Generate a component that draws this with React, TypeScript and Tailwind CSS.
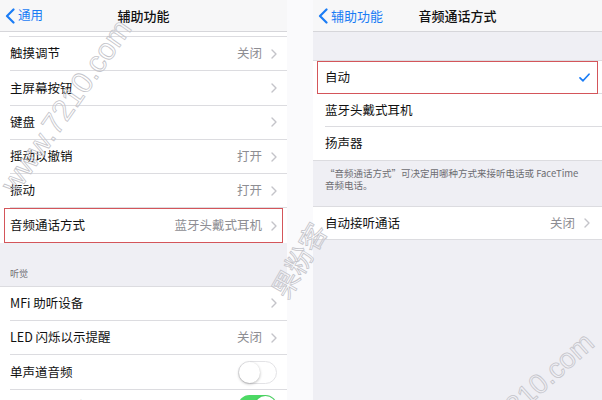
import React from "react";

type Row = {
  label: string;
  value?: string;
  chevron?: boolean;
  toggle?: "on" | "off";
  check?: boolean;
  highlight?: boolean;
  last?: boolean;
};

const Chevron = () => (
  <svg width="6" height="10" viewBox="0 0 6 10" className="shrink-0">
    <path d="M1 1l4 4-4 4" fill="none" stroke="#c4c4c9" strokeWidth="1.4" strokeLinecap="round" strokeLinejoin="round" />
  </svg>
);

const BackArrow = () => (
  <svg width="10" height="16" viewBox="0 0 10 16" className="shrink-0">
    <path d="M8.5 1.5L2 8l6.5 6.5" fill="none" stroke="#1a7cf5" strokeWidth="2.2" strokeLinecap="round" strokeLinejoin="round" />
  </svg>
);

const Check = () => (
  <svg width="11" height="9" viewBox="0 0 11 9">
    <path d="M1 4.8l3 3L10 1.2" fill="none" stroke="#1a7cf5" strokeWidth="1.7" strokeLinecap="round" strokeLinejoin="round" />
  </svg>
);

const Toggle = ({ on }: { on: boolean }) =>
  on ? (
    <div className="w-[39px] h-[23px] rounded-full bg-[#4cd964] flex items-center justify-end p-[1px]">
      <div className="w-[21px] h-[21px] rounded-full bg-white shadow-[0_1px_3px_rgba(0,0,0,0.3)]" />
    </div>
  ) : (
    <div className="w-[39px] h-[23px] rounded-full bg-white border border-[#e3e3e6] flex items-center">
      <div className="w-[21px] h-[21px] rounded-full bg-white shadow-[0_1px_3px_rgba(0,0,0,0.3)]" />
    </div>
  );

const ListRow = ({ row, inset, pr, h }: { row: Row; inset: string; pr: string; h: string }) => (
  <div className={`relative shrink-0 bg-white ${h}`}>
    <div className={`h-full flex items-center ${inset}`}>
      <div
        className={`flex-1 h-full flex items-center ${pr} ${row.last ? "" : "border-b border-[#dcdce0]"}`}
      >
        <span className="flex-1 text-[12.5px] text-[#111]">{row.label}</span>
        {row.value && <span className="text-[12.5px] text-[#8e8e93] mr-[9px]">{row.value}</span>}
        {row.chevron && <Chevron />}
        {row.check && <Check />}
        {row.toggle && <Toggle on={row.toggle === "on"} />}
      </div>
    </div>
    {row.highlight && (
      <div className="absolute top-0 bottom-0 left-[4px] right-[4px] border-[1.5px] border-[#d4555a]" />
    )}
  </div>
);

const leftGroup1: Row[] = [
  { label: "触摸调节", value: "关闭", chevron: true },
  { label: "主屏幕按钮", chevron: true },
  { label: "键盘", chevron: true },
  { label: "摇动以撤销", value: "打开", chevron: true },
  { label: "振动", value: "打开", chevron: true },
  { label: "音频通话方式", value: "蓝牙头戴式耳机", chevron: true, highlight: true, last: true },
];

const leftGroup2: Row[] = [
  { label: "MFi 助听设备", chevron: true },
  { label: "LED 闪烁以示提醒", value: "关闭", chevron: true },
  { label: "单声道音频", toggle: "off" },
  { label: "电话噪声消除", toggle: "on", last: true },
];

const rightGroup: Row[] = [
  { label: "自动", check: true, highlight: true },
  { label: "蓝牙头戴式耳机" },
  { label: "扬声器", last: true },
];

const Watermark = ({ text, className }: { text: string; className: string }) => (
  <div
    className={`absolute leading-none whitespace-nowrap text-transparent pointer-events-none [-webkit-text-stroke:0.8px_#c4c4ca] font-['Liberation_Sans','Noto_Sans_CJK_SC',sans-serif] ${className}`}
  >
    {text}
  </div>
);

export default function App() {
  return (
    <div className="relative w-[602px] h-[400px] overflow-hidden flex bg-[#fafafc] font-['Noto_Sans_CJK_SC',sans-serif]">
      {/* left screen */}
      <div className="w-[287px] h-full bg-[#efeff4] flex flex-col overflow-hidden">
        <div className="h-[32px] shrink-0 bg-[#f7f7f8] border-b border-[#d6d6da] grid grid-cols-[1fr_auto_1fr] items-center">
          <div className="flex items-center gap-[3px] pl-[5px]">
            <BackArrow />
            <span className="text-[12.5px] text-[#1a7cf5]">通用</span>
          </div>
          <span className="text-[13px] font-medium text-[#111]">辅助功能</span>
          <div />
        </div>
        <div className="h-[5px] shrink-0 bg-white pl-[9px]">
          <div className="h-full border-b border-[#dcdce0]" />
        </div>
        {leftGroup1.map((r) => (
          <ListRow key={r.label} row={r} inset="pl-[10px]" pr="pr-[10px]" h="h-[34.3px]" />
        ))}
        <div className="h-[44px] shrink-0 flex items-end pl-[10px] pb-[5px] border-b border-[#dcdce0]">
          <span className="text-[9px] text-[#6d6d72]">听觉</span>
        </div>
        {leftGroup2.map((r) => (
          <ListRow key={r.label} row={r} inset="pl-[10px]" pr="pr-[10px]" h="h-[34.3px]" />
        ))}
      </div>

      <div className="w-[26px] h-full" />

      {/* right screen */}
      <div className="flex-1 h-full bg-[#efeff4] flex flex-col overflow-hidden">
        <div className="h-[32px] shrink-0 bg-[#f7f7f8] border-b border-[#d6d6da] grid grid-cols-[1fr_auto_1fr] items-center">
          <div className="flex items-center gap-[3px] pl-[5px]">
            <BackArrow />
            <span className="text-[13px] text-[#1a7cf5] whitespace-nowrap">辅助功能</span>
          </div>
          <span className="text-[13px] font-medium text-[#111]">音频通话方式</span>
          <div />
        </div>
        <div className="h-[29px] shrink-0 border-b border-[#dcdce0]" />
        {rightGroup.map((r) => (
          <ListRow key={r.label} row={r} inset="pl-[12px]" pr="pr-[12px]" h="h-[33px]" />
        ))}
        <div className="h-[46px] shrink-0 border-t border-[#dcdce0] px-[12px] pt-[6px] text-[9.5px] leading-[12px] text-[#6d6d72]">
          “音频通话方式”可决定用哪种方式来接听电话或 FaceTime
          <br />
          音频电话。
        </div>
        <div className="shrink-0 border-t border-b border-[#dcdce0]">
          <ListRow
            row={{ label: "自动接听通话", value: "关闭", chevron: true, last: true }}
            inset="pl-[12px]"
            pr="pr-[12px]"
            h="h-[32px]"
          />
        </div>
      </div>

      {/* watermarks */}
      <Watermark text="www.7210.com" className="left-[20px] top-[168px] text-[30px] origin-bottom-left -rotate-[55deg]" />
      <Watermark text="果粉客" className="left-[292px] top-[276px] text-[27px] origin-bottom-left -rotate-[60deg]" />
      <Watermark text="www.7210.com" className="left-[458px] top-[448px] text-[28px] origin-bottom-left -rotate-[42deg]" />
    </div>
  );
}
